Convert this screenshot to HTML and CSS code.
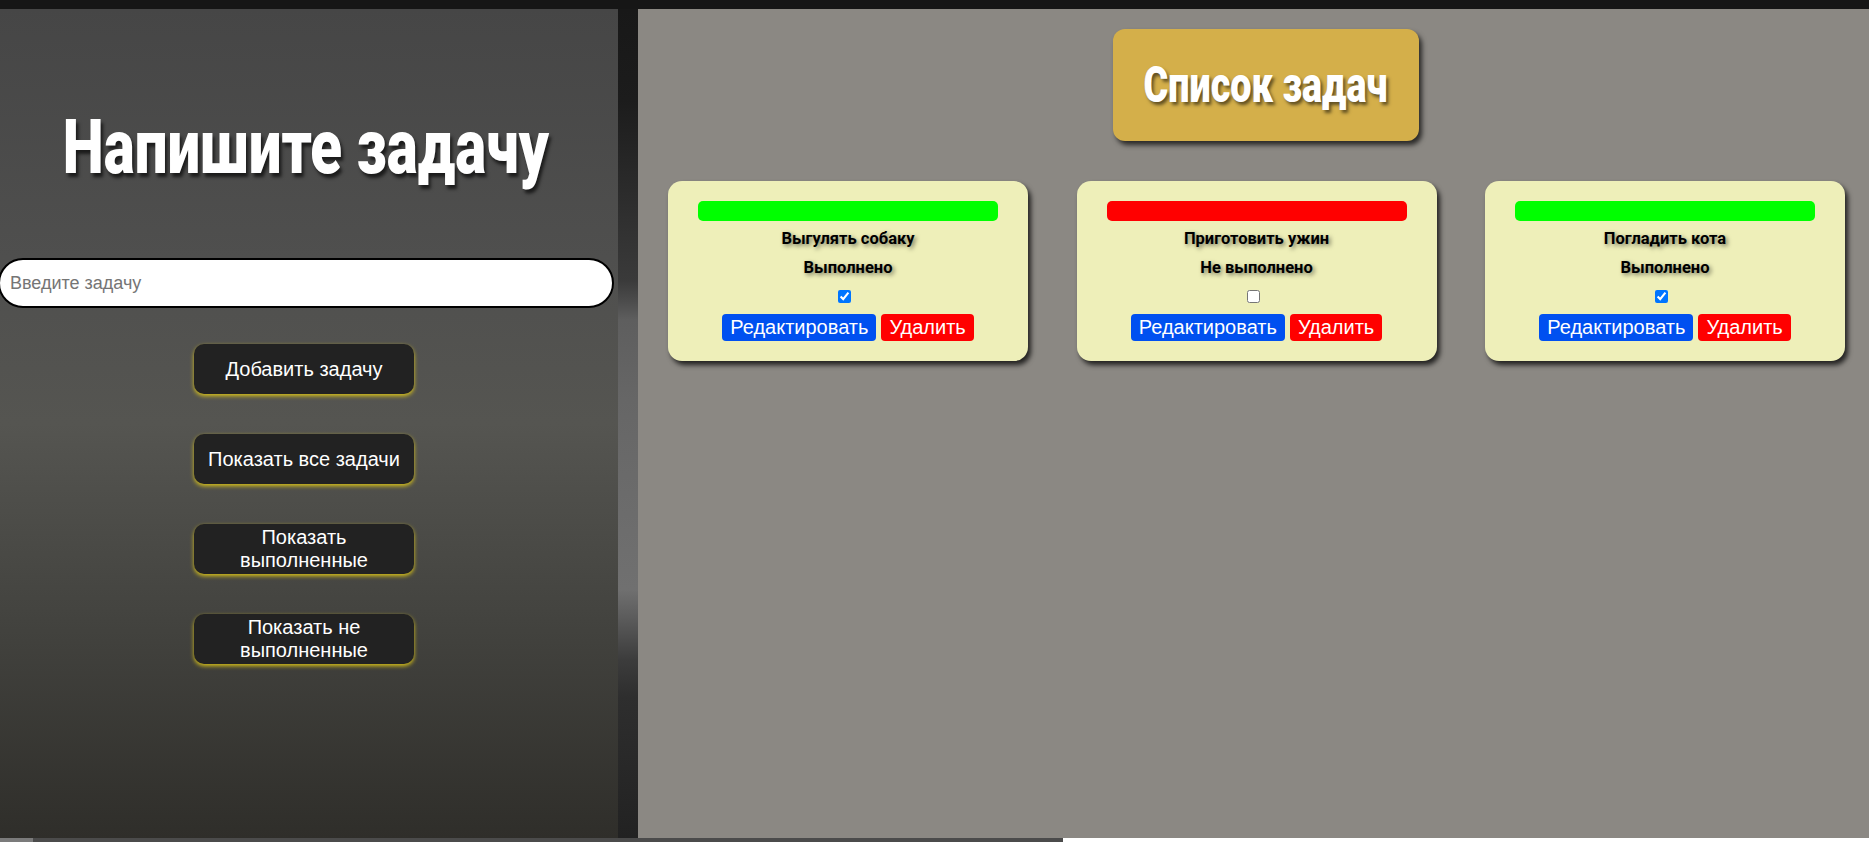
FILE: index.html
```html
<!DOCTYPE html>
<html lang="ru">
<head>
<meta charset="utf-8">
<title>Список задач</title>
<link rel="stylesheet" href="styles.css">
</head>
<body>
<div class="topbar"></div>
<div class="layout">
  <aside class="sidebar">
    <h1 class="sidebar-title"><span class="squeeze">Напишите задачу</span></h1>
    <input class="task-input" type="text" placeholder="Введите задачу">
    <div class="actions">
      <button class="action-btn">Добавить задачу</button>
      <button class="action-btn">Показать все задачи</button>
      <button class="action-btn">Показать выполненные</button>
      <button class="action-btn">Показать не выполненные</button>
    </div>
  </aside>
  <div class="divider"></div>
  <main class="board">
    <div class="board-head">
      <h2 class="board-title"><span class="squeeze-sm">Список задач</span></h2>
    </div>
    <div class="cards">
      <div class="card">
        <div class="card-status done"></div>
        <p class="card-text">Выгулять собаку</p>
        <p class="card-text">Выполнено</p>
        <input class="card-check" type="checkbox" checked>
        <div class="card-actions">
          <button class="btn btn-edit">Редактировать</button>
          <button class="btn btn-delete">Удалить</button>
        </div>
      </div>
      <div class="card">
        <div class="card-status todo"></div>
        <p class="card-text">Приготовить ужин</p>
        <p class="card-text">Не выполнено</p>
        <input class="card-check" type="checkbox">
        <div class="card-actions">
          <button class="btn btn-edit">Редактировать</button>
          <button class="btn btn-delete">Удалить</button>
        </div>
      </div>
      <div class="card">
        <div class="card-status done"></div>
        <p class="card-text">Погладить кота</p>
        <p class="card-text">Выполнено</p>
        <input class="card-check" type="checkbox" checked>
        <div class="card-actions">
          <button class="btn btn-edit">Редактировать</button>
          <button class="btn btn-delete">Удалить</button>
        </div>
      </div>
    </div>
  </main>
</div>
<div class="scrollbar"><div class="scroll-start"></div><div class="scroll-thumb"></div></div>
</body>
</html>
```
FILE: styles.css
```css
* { box-sizing: border-box; }
html, body { margin: 0; padding: 0; }
body {
  width: 1869px;
  height: 842px;
  overflow: hidden;
  background: #ffffff;
  font-family: "Liberation Sans", Arial, sans-serif;
}
.topbar { height: 9px; background: #161616; }
.layout { display: flex; height: 829px; }
.sidebar {
  width: 618px;
  padding-right: 6px;
  display: flex;
  flex-direction: column;
  align-items: center;
  background: linear-gradient(#464646 0%, #4f4f4e 30%, #555551 50%, #42423e 75%, #2f2e2a 100%);
}
.sidebar-title {
  margin: 101px 0 0;
  font: 900 76px/74px Roboto, sans-serif;
  color: #fff;
  text-shadow: 3px 4px 4px rgba(0,0,0,0.65);
  white-space: nowrap;
}
.squeeze { display: inline-block; transform: scaleX(0.767); }
.squeeze-sm { display: inline-block; transform: scaleX(0.746); }
.task-input {
  margin: 74px 0 0;
  width: 616px;
  height: 50px;
  border: 2px solid #000;
  border-radius: 25px;
  padding: 0 10px;
  font: 18px "Liberation Sans", Arial, sans-serif;
  background: #fff;
  outline: none;
}
.task-input::placeholder { color: #757575; }
.actions { margin-top: 36px; display: flex; flex-direction: column; gap: 40px; margin-left: -4px; }
.action-btn {
  width: 220px;
  height: 50px;
  padding: 0 8px;
  border: none;
  border-radius: 10px;
  background: #222222;
  color: #fff;
  font: 20px/23px "Liberation Sans", Arial, sans-serif;
  box-shadow: 0 2px 4px rgba(230, 205, 20, 0.9);
}
.divider {
  width: 20px;
  background: linear-gradient(#181818 0%, #1c1c1c 11%, #3a3a3a 32.7%, #4a4a4a 35%, #5e5e5e 37.5%, #666 47%, #707070 70%, #5a5a5a 73.7%, #3c3c3c 78.5%, #2e2e2e 83%, #222 100%);
}
.board {
  flex: 1;
  background: #8b8883;
}
.board-head { display: flex; justify-content: center; padding: 20px 0 0 25px; }
.board-title {
  margin: 0;
  width: 306px;
  height: 112px;
  display: flex;
  align-items: center;
  justify-content: center;
  background: #d4af4a;
  border-radius: 12px;
  box-shadow: 3px 4px 5px rgba(0,0,0,0.7);
  font: 900 50.6px/1 Roboto, sans-serif;
  color: #fff;
  text-shadow: 3px 3px 4px rgba(0,0,0,0.55);
  white-space: nowrap;
}
.cards { display: flex; gap: 48.5px; padding: 40px 0 0 30px; }
.card {
  width: 360px;
  height: 180px;
  padding: 20px 30px;
  background: #eeefb9;
  border-radius: 14px;
  box-shadow: 3px 4px 5px rgba(0,0,0,0.75);
  display: flex;
  flex-direction: column;
  align-items: center;
}
.card-status { width: 300px; height: 20px; border-radius: 5px; margin-bottom: 3px; }
.card-status.done { background: #00ff00; }
.card-status.todo { background: #ff0000; }
.card-text {
  margin: 0;
  height: 29px;
  font: 700 16.5px/29px Roboto, sans-serif;
  color: #000;
  text-shadow: 2px 2px 4px rgba(0,0,0,0.5);
  white-space: nowrap;
}
.card-check { margin: 8px 0 0 -7px; width: 13px; height: 13px; }
.card-actions { display: flex; gap: 5px; margin-top: 11px; }
.btn {
  border: none;
  border-radius: 4px;
  padding: 2px 8px;
  font: 20px/23px "Liberation Sans", Arial, sans-serif;
  color: #fff;
}
.btn-edit { background: #0050f0; }
.btn-delete { background: #ff0000; }
.scrollbar { height: 4px; display: flex; }
.scroll-start { width: 33px; background: #7b7b7b; }
.scroll-thumb { width: 1030px; background: #4b4b4b; }
```
